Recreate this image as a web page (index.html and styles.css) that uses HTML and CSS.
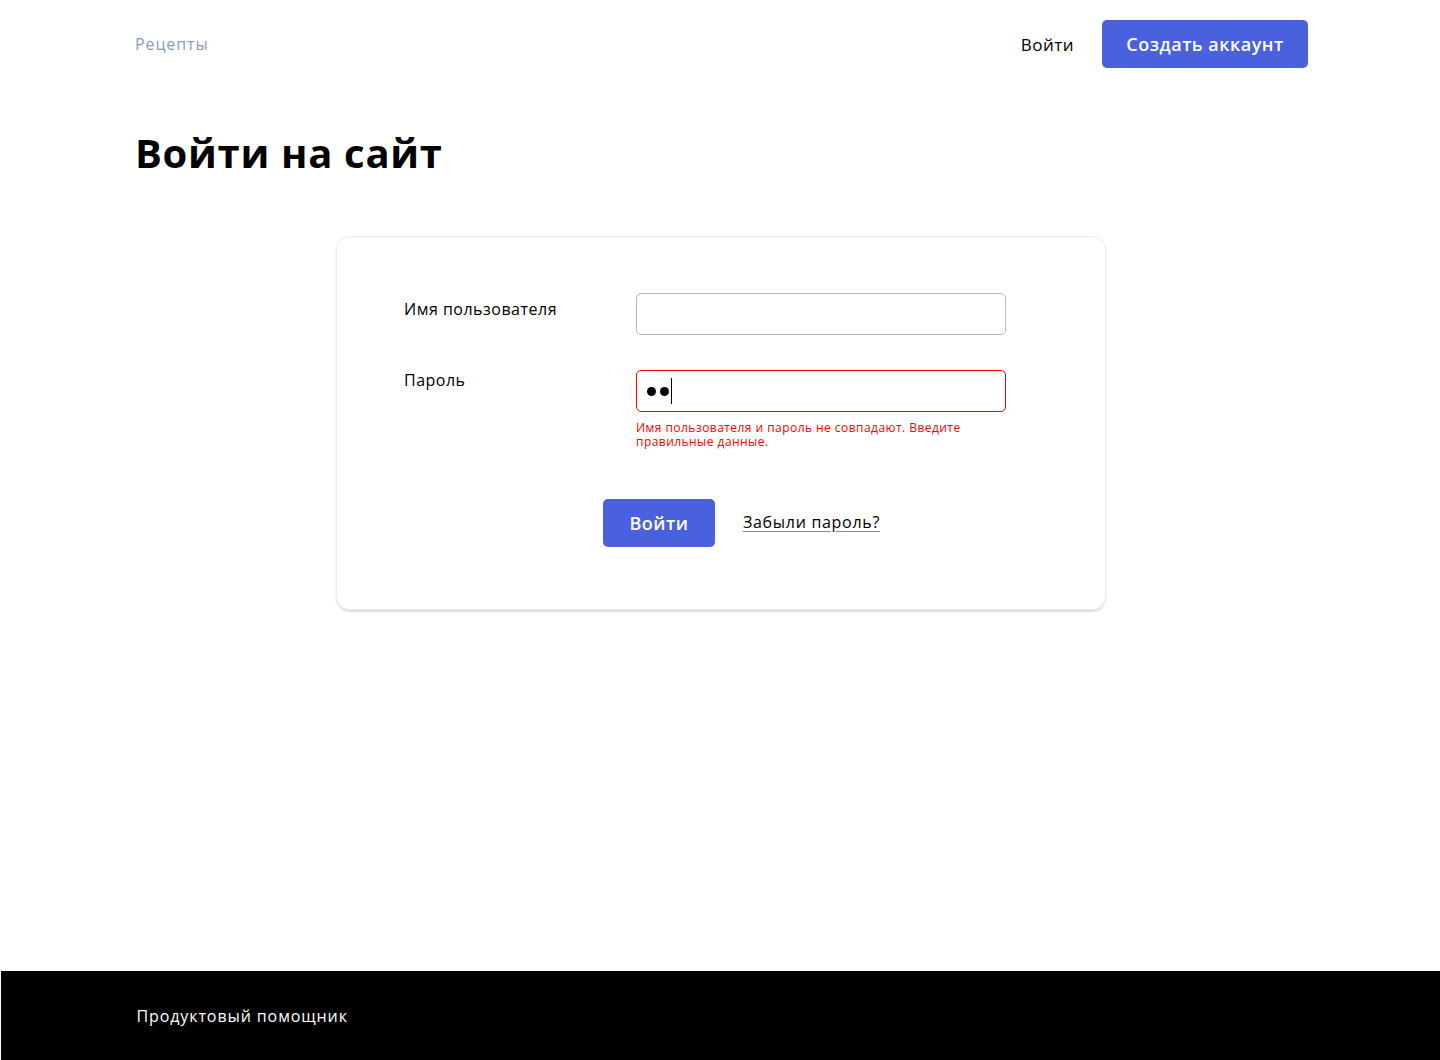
FILE: index.html
```html
<!DOCTYPE html>
<html lang="ru">
<head>
<meta charset="utf-8">
<title>Войти на сайт</title>
<link rel="stylesheet" href="styles.css">
</head>
<body>
<div class="page">
  <header class="header">
    <a class="nav-link" href="#">Рецепты</a>
    <div class="header-actions">
      <a class="login-link" href="#">Войти</a>
      <a class="btn btn-header" href="#">Создать аккаунт</a>
    </div>
  </header>
  <main class="main">
    <h1 class="title">Войти на сайт</h1>
    <form class="card">
      <div class="row">
        <label class="label" for="username">Имя пользователя</label>
        <div class="field">
          <input class="input" id="username" type="text">
        </div>
      </div>
      <div class="row">
        <label class="label label-tight">Пароль</label>
        <div class="field">
          <div class="input input-error" role="textbox" aria-label="Пароль">
            <span class="dot"></span><span class="dot"></span><span class="caret"></span>
          </div>
          <div class="error">Имя пользователя и пароль не совпадают. Введите правильные данные.</div>
        </div>
      </div>
      <div class="actions">
        <button class="btn btn-submit" type="button">Войти</button>
        <a class="forgot" href="#">Забыли пароль?</a>
      </div>
    </form>
  </main>
  <footer class="footer">
    <div class="footer-inner">Продуктовый помощник</div>
  </footer>
</div>
</body>
</html>
```
FILE: styles.css
```css
* { box-sizing: border-box; }
html, body { margin: 0; padding: 0; }
body {
  font-family: "Open Sans", "Noto Sans", sans-serif;
  color: #000;
  background: #fff;
}
a { text-decoration: none; color: inherit; }
.page {
  min-height: 1060px;
  display: flex;
  flex-direction: column;
}
.header {
  width: 1176px;
  margin: 0 auto;
  height: 88px;
  display: flex;
  align-items: center;
  justify-content: space-between;
  padding-left: 3px;
}
.nav-link {
  font-size: 16px;
  letter-spacing: 0.9px;
  color: #8c9bb4;
}
.header-actions {
  display: flex;
  align-items: center;
  gap: 28px;
}
.login-link {
  font-size: 17px;
  letter-spacing: 0.5px;
  color: #000;
}
.btn {
  display: inline-flex;
  align-items: center;
  justify-content: center;
  background: #4a61dd;
  color: #fff;
  border: none;
  border-radius: 5px;
  font-family: inherit;
  font-weight: 600;
  cursor: pointer;
}
.btn-header {
  width: 206px;
  height: 48px;
  font-size: 18px;
  letter-spacing: 0.5px;
}
.main {
  flex: 1;
  width: 1176px;
  margin: 0 auto;
}
.title {
  margin: 36px 0 0 3px;
  font-size: 40px;
  line-height: 58px;
  font-weight: 700;
  letter-spacing: 0.7px;
}
.card {
  width: 770px;
  margin: 54px 0 0 204px;
  border: 1px solid #ececec;
  border-radius: 14px;
  box-shadow: 0 2px 2px rgba(0,0,0,0.14);
  padding: 56px 99px 62px 67px;
}
.row {
  display: flex;
  margin-bottom: 35px;
}
.row:last-of-type { margin-bottom: 0; }
.label {
  width: 232px;
  flex: none;
  font-size: 16px;
  letter-spacing: 0.5px;
  padding-top: 5px;
}
.label-tight { padding-top: 0; margin-top: -1px; }
.field { width: 370px; }
.input {
  display: flex;
  align-items: center;
  width: 370px;
  height: 42px;
  border: 1px solid #b9b9b9;
  border-radius: 5px;
  font-family: inherit;
  font-size: 17px;
  padding: 0 10px;
  outline: none;
  background: #fff;
}
.input-error {
  border-color: #ff0000;
  gap: 4px;
}
.dot {
  width: 9px;
  height: 9px;
  border-radius: 50%;
  background: #000;
}
.caret {
  width: 1px;
  height: 26px;
  margin-left: -2px;
  background: #000;
}
.error {
  margin-top: 9px;
  font-size: 12px;
  letter-spacing: 0.45px;
  line-height: 14px;
  color: #ff0000;
}
.actions {
  display: flex;
  align-items: center;
  margin-top: 50px;
  padding-left: 199px;
  gap: 28px;
}
.btn-submit {
  width: 112px;
  height: 48px;
  font-size: 18px;
  letter-spacing: 0.5px;
}
.forgot {
  font-size: 16px;
  letter-spacing: 0.7px;
  text-decoration: underline;
  text-underline-offset: 3px;
  text-decoration-color: #8a8a8a;
  margin-top: -2px;
}
.footer {
  background: #000;
  height: 89px;
  margin-left: 1px;
  display: flex;
  align-items: center;
}
.footer-inner {
  width: 1172px;
  margin: 0 auto;
  padding-left: 2px;
  color: #fff;
  font-size: 16px;
  letter-spacing: 0.9px;
}
```
